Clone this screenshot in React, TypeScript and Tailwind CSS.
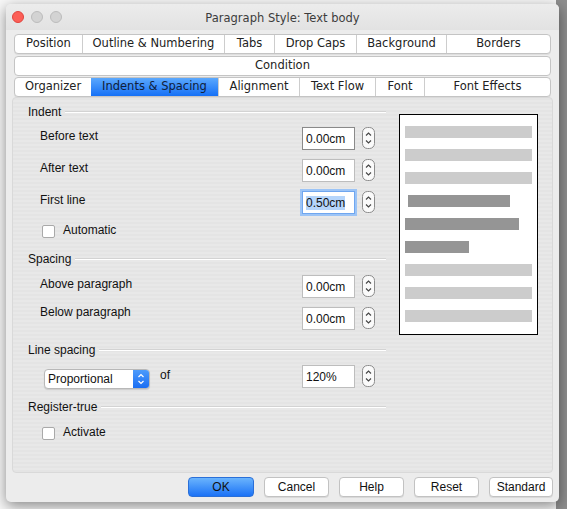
import React from "react"

const sans = "font-['Liberation_Sans',Arial,sans-serif]"
const ui = "font-['DejaVu_Sans',sans-serif]"

const topTabs = [
  { label: "Position", w: "w-[67px]" },
  { label: "Outline & Numbering", w: "w-[142px]" },
  { label: "Tabs", w: "w-[50px]" },
  { label: "Drop Caps", w: "w-[82px]" },
  { label: "Background", w: "w-[90px]" },
  { label: "Borders", w: "flex-1" },
]

const bottomTabs = [
  { label: "Organizer", w: "w-[76px]" },
  { label: "Indents & Spacing", w: "w-[127px]", active: true },
  { label: "Alignment", w: "w-[81px]" },
  { label: "Text Flow", w: "w-[76px]" },
  { label: "Font", w: "w-[49px]" },
  { label: "Font Effects", w: "flex-1" },
]

type Tab = { label: string; w: string; active?: boolean }

const TabRow = ({ tabs }: { tabs: Tab[] }) => (
  <div className="flex h-[20px] rounded-[4px] border border-[#c4c4c4] bg-white overflow-hidden shadow-[0_1px_0_rgba(0,0,0,0.06)]">
    {tabs.map((t, i) => (
      <div
        key={t.label}
        className={`${t.w} flex items-center justify-center text-[11.5px] ${ui} ${
          i > 0 ? "border-l border-[#cdcdcd]" : ""
        } ${
          t.active
            ? "bg-[linear-gradient(#5ba8fd,#1570f6)] text-[#10203a] border-l-0"
            : "text-[#222]"
        }`}
      >
        {t.label}
      </div>
    ))}
  </div>
)

const Spinner = () => (
  <svg width="13" height="22" viewBox="0 0 13 22" className="ml-[7px]">
    <rect x="0.5" y="0.5" width="12" height="21" rx="5" fill="#fafafa" stroke="#8c8c8c" />
    <path d="M4 8.5 L6.5 6 L9 8.5" fill="none" stroke="#444" strokeWidth="1.1" />
    <path d="M4 13.5 L6.5 16 L9 13.5" fill="none" stroke="#444" strokeWidth="1.1" />
  </svg>
)

const Field = ({ value, focused, dark }: { value: string; focused?: boolean; dark?: boolean }) => (
  <div
    className={`w-[53px] h-[23px] bg-white flex items-center pl-[3px] text-[12px] text-[#111] ${sans} ${
      focused
        ? "border border-[#6fa6ef] shadow-[0_0_0_2px_#9cc4f6]"
        : dark
        ? "border border-[#8a8a8a]"
        : "border border-[#bdbdbd]"
    }`}
  >
    {focused ? <span className="bg-[#b5d5fb] leading-[14px]">{value}</span> : value}
  </div>
)

const Heading = ({ label }: { label: string }) => (
  <div className="flex items-center h-[16px] pl-[15px]">
    <span className={`text-[12px] text-[#111] ${sans}`}>{label}</span>
    <div className="flex-1 ml-[4px] h-[2px] border-t border-[#d3d3d3] border-b border-b-white" />
  </div>
)

const FieldRow = ({
  label,
  value,
  focused,
  dark,
  raise,
}: {
  label: string
  value: string
  focused?: boolean
  dark?: boolean
  raise?: boolean
}) => (
  <div className="flex items-start h-[23px] pr-[11px]">
    <span className={`flex-1 pl-[27px] text-[12px] text-[#111] ${sans} ${raise ? "-mt-[4px]" : ""}`}>{label}</span>
    <Field value={value} focused={focused} dark={dark} />
    <Spinner />
  </div>
)

const Check = ({ label }: { label: string }) => (
  <div className="flex items-center h-[16px] pl-[29px]">
    <div className="w-[13px] h-[13px] bg-white border border-[#a9a9a9] rounded-[2px] mt-[3px]" />
    <span className={`ml-[8px] text-[12px] text-[#111] ${sans}`}>{label}</span>
  </div>
)

const Bar = ({ cls }: { cls: string }) => <div className={`h-[12px] ${cls}`} />

export default function App() {
  return (
    <div className="w-[567px] h-[509px] overflow-hidden bg-[linear-gradient(to_right,#f7f7f7_0,#f7f7f7_556px,#8e8e8e_556px)] pt-[4px] pl-[6px]">
      <div className="w-[553px] h-[498px] rounded-[5px] bg-[#ececec] shadow-[0_4px_14px_rgba(0,0,0,0.45)] flex flex-col">
        {/* title bar */}
        <div className="h-[26px] relative flex items-center justify-center rounded-t-[5px] bg-[linear-gradient(#ececec,#e2e2e2)]">
          <div className="absolute left-[6px] top-[7px] flex gap-[7px]">
            <div className="w-[12px] h-[12px] rounded-full bg-[#fc5f57] border border-[#e0443e]" />
            <div className="w-[12px] h-[12px] rounded-full bg-[#d3d3d3] border border-[#bcbcbc]" />
            <div className="w-[12px] h-[12px] rounded-full bg-[#d3d3d3] border border-[#bcbcbc]" />
          </div>
          <span className={`text-[11.5px] text-[#3c3c3c] ${ui} mt-[3px]`}>Paragraph Style: Text body</span>
        </div>

        {/* tabs */}
        <div className="px-[8px] mt-[4px] flex flex-col">
          <TabRow tabs={topTabs} />
          <div className={`mt-[2px] h-[20px] rounded-[4px] border border-[#c4c4c4] bg-white flex items-center justify-center text-[11.5px] text-[#222] ${ui}`}>
            Condition
          </div>
          <div className="mt-[1px]">
            <TabRow tabs={bottomTabs} />
          </div>
        </div>

        {/* panel */}
        <div className="mx-[6px] h-[376px] rounded-[4px] border border-[#d9d9d9] bg-[repeating-linear-gradient(0deg,#e4e4e4_0px,#e4e4e4_2px,#e8e8e8_2px,#e8e8e8_4px)] flex pt-[6px]">
          <div className="w-[373px] flex flex-col">
            <Heading label="Indent" />
            <div className="mt-[7px] flex flex-col gap-[9px]">
              <FieldRow label="Before text" value="0.00cm" dark />
              <FieldRow label="After text" value="0.00cm" />
              <FieldRow label="First line" value="0.50cm" focused />
            </div>
            <div className="mt-[8px]">
              <Check label="Automatic" />
            </div>
            <div className="mt-[13px]">
              <Heading label="Spacing" />
            </div>
            <div className="mt-[8px] flex flex-col gap-[9px]">
              <FieldRow label="Above paragraph" value="0.00cm" />
              <FieldRow label="Below paragraph" value="0.00cm" raise />
            </div>
            <div className="mt-[12px]">
              <Heading label="Line spacing" />
            </div>
            <div className="mt-[7px] flex items-start h-[23px] pr-[11px]">
              <div className="ml-[31px] mt-[4px] w-[106px] h-[20px] rounded-[4px] bg-white border border-[#b8b8b8] shadow-[0_1px_1px_rgba(0,0,0,0.12)] flex overflow-hidden">
                <span className={`flex-1 pl-[3px] flex items-center text-[12px] text-[#111] ${sans}`}>Proportional</span>
                <div className="w-[16px] bg-[linear-gradient(#4c9bfb,#1a6ef3)] flex items-center justify-center">
                  <svg width="8" height="14" viewBox="0 0 8 14">
                    <path d="M1.5 5 L4 2.5 L6.5 5" fill="none" stroke="#fff" strokeWidth="1.2" />
                    <path d="M1.5 9 L4 11.5 L6.5 9" fill="none" stroke="#fff" strokeWidth="1.2" />
                  </svg>
                </div>
              </div>
              <span className={`ml-[10px] mt-[1px] flex-1 text-[12px] text-[#111] ${sans}`}>of</span>
              <Field value="120%" />
              <Spinner />
            </div>
            <div className="mt-[11px]">
              <Heading label="Register-true" />
            </div>
            <div className="mt-[9px]">
              <Check label="Activate" />
            </div>
          </div>

          {/* preview */}
          <div className="ml-[13px] mt-[10px] w-[139px] h-[221px] bg-white border border-black flex flex-col gap-[11px] pt-[11px] px-[5px]">
            <Bar cls="bg-[#cccccc] w-full" />
            <Bar cls="bg-[#cccccc] w-full" />
            <Bar cls="bg-[#cccccc] w-full" />
            <Bar cls="bg-[#959595] w-[102px] ml-[3px]" />
            <Bar cls="bg-[#959595] w-[114px]" />
            <Bar cls="bg-[#959595] w-[64px]" />
            <Bar cls="bg-[#cccccc] w-full" />
            <Bar cls="bg-[#cccccc] w-full" />
            <Bar cls="bg-[#cccccc] w-full" />
          </div>
        </div>

        {/* buttons */}
        <div className={`mt-[4px] flex justify-end gap-[10px] pr-[6px] text-[12px] ${sans}`}>
          <div className="w-[66px] h-[20px] rounded-[4px] bg-[linear-gradient(#6ab4fd,#1b72f6)] border border-[#2a6fd8] flex items-center justify-center text-[#111]">
            OK
          </div>
          {["Cancel", "Help", "Reset", "Standard"].map((b) => (
            <div
              key={b}
              className={`${b === "Standard" ? "w-[64px]" : "w-[65px]"} h-[20px] rounded-[4px] bg-white border border-[#c2c2c2] shadow-[0_1px_0_rgba(0,0,0,0.08)] flex items-center justify-center text-[#111]`}
            >
              {b}
            </div>
          ))}
        </div>
      </div>
    </div>
  )
}
